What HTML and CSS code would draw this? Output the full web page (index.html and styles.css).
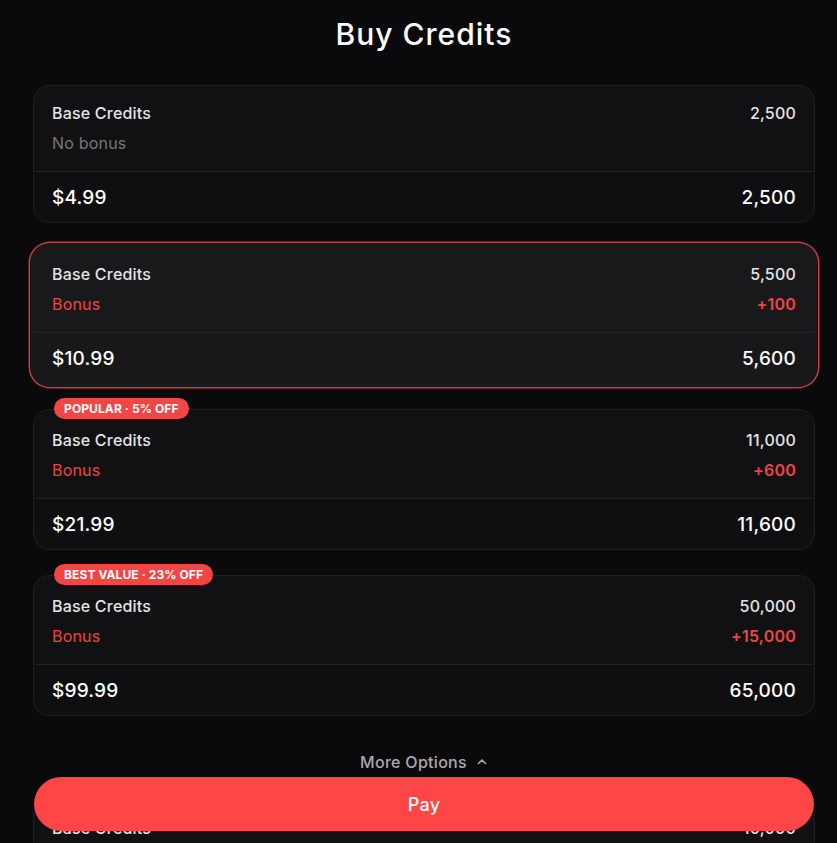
FILE: index.html
```html
<!DOCTYPE html>
<html lang="en">
<head>
    <meta charset="UTF-8">
    <title>Buy Credits</title>
    <link rel="stylesheet" href="styles.css">
</head>
<body>

<main class="shop">
    <h1 class="title">Buy Credits</h1>

    <div class="packs">
        <div class="pack">
            <div class="pack-top">
                <div class="row"><span class="label">Base Credits</span><span class="value">2,500</span></div>
                <div class="row"><span class="muted">No bonus</span></div>
            </div>
            <div class="pack-bottom">
                <span class="price">$4.99</span><span class="total">2,500</span>
            </div>
        </div>

        <div class="pack selected">
            <div class="pack-top">
                <div class="row"><span class="label">Base Credits</span><span class="value">5,500</span></div>
                <div class="row bonus"><span>Bonus</span><span class="value">+100</span></div>
            </div>
            <div class="pack-bottom">
                <span class="price">$10.99</span><span class="total">5,600</span>
            </div>
        </div>

        <div class="pack has-badge">
            <span class="badge">Popular · 5% off</span>
            <div class="pack-top">
                <div class="row"><span class="label">Base Credits</span><span class="value">11,000</span></div>
                <div class="row bonus"><span>Bonus</span><span class="value">+600</span></div>
            </div>
            <div class="pack-bottom">
                <span class="price">$21.99</span><span class="total">11,600</span>
            </div>
        </div>

        <div class="pack has-badge">
            <span class="badge">Best value · 23% off</span>
            <div class="pack-top">
                <div class="row"><span class="label">Base Credits</span><span class="value">50,000</span></div>
                <div class="row bonus"><span>Bonus</span><span class="value">+15,000</span></div>
            </div>
            <div class="pack-bottom">
                <span class="price">$99.99</span><span class="total">65,000</span>
            </div>
        </div>
    </div>

    <button class="more" type="button">
        More Options
        <svg width="12" height="12" viewBox="0 0 12 12" fill="none" stroke="currentColor" stroke-width="1.6" stroke-linecap="round" stroke-linejoin="round"><polyline points="2.5,7.5 6,4 9.5,7.5"/></svg>
    </button>

    <!-- extra packs, scrolled under the pay button -->
    <div class="packs">
        <div class="pack">
            <div class="pack-top">
                <div class="row"><span class="label">Base Credits</span><span class="value">10,000</span></div>
            </div>
        </div>
    </div>
</main>

<button class="pay" type="button">Pay</button>

</body>
</html>
```

FILE: styles.css
```css
html, body {
    height: 100%;
    overflow: hidden;
}
body {
    margin: 0;
    background: #0a0a0c;
    color: #e8e8ea;
    font-family: Inter, "Noto Sans", sans-serif;
    letter-spacing: 0.2px;
}
.shop {
    padding: 14px 22px 0 33px;
}
.title {
    margin: 0 0 31px;
    text-align: center;
    font-size: 30px;
    line-height: 40px;
    font-weight: 500;
    color: #fff;
    letter-spacing: 1px;
}
.packs {
    display: flex;
    flex-direction: column;
    gap: 23px;
}
.pack {
    position: relative;
    border: 1px solid #1f1f22;
    border-radius: 16px;
    background: #111113;
}
.pack-top {
    padding: 12px 18px 13px;
    border-bottom: 1px solid #232326;
}
.pack-bottom {
    display: flex;
    justify-content: space-between;
    align-items: center;
    height: 50px;
    padding: 0 18px;
    background: #0f0f11;
    border-radius: 0 0 16px 16px;
    font-size: 19px;
    font-weight: 500;
    color: #fff;
}
.row {
    display: flex;
    justify-content: space-between;
    align-items: center;
    height: 30px;
    font-size: 16px;
    font-weight: 500;
}
.label, .value {
    color: #e4e4e6;
}
.muted {
    color: #76767a;
    font-weight: 400;
}
.bonus, .bonus .value {
    color: #f04444;
}
.bonus span:first-child {
    font-weight: 400;
}
.bonus .value {
    font-weight: 600;
}

/* picked pack: lifted card with a red ring round it */
.pack.selected {
    background: #19191b;
    border-color: #19191b;
    box-shadow: 0 0 0 3px #19191b, 0 0 0 4.5px #c63b3d;
    border-radius: 17px;
}
.pack.selected .pack-bottom {
    background: #18181a;
}
.pack.selected .pack-top {
    border-bottom-color: #242427;
}

.pack.has-badge {
    margin-top: 2px;
}
.pack.has-badge .pack-top {
    padding-top: 15px;
}
.badge {
    position: absolute;
    top: -12px;
    left: 20px;
    height: 21px;
    line-height: 21px;
    padding: 0 10px;
    border-radius: 11px;
    background: #f24646;
    color: #fff;
    font-size: 12px;
    font-weight: 700;
    text-transform: uppercase;
    letter-spacing: 0.1px;
}

.more {
    display: flex;
    align-items: center;
    gap: 9px;
    margin: 31px auto 23px;
    height: 30px;
    padding: 0;
    border: none;
    background: none;
    color: #a9a9ad;
    font-family: inherit;
    font-size: 16px;
    font-weight: 500;
    letter-spacing: 0.3px;
    cursor: pointer;
}

.pay {
    position: fixed;
    left: 34px;
    right: 23px;
    bottom: 12px;
    height: 54px;
    border: none;
    border-radius: 27px;
    background: #fe4646;
    color: #fff;
    font-family: inherit;
    font-size: 18px;
    font-weight: 500;
    letter-spacing: 0.3px;
    cursor: pointer;
}
```
